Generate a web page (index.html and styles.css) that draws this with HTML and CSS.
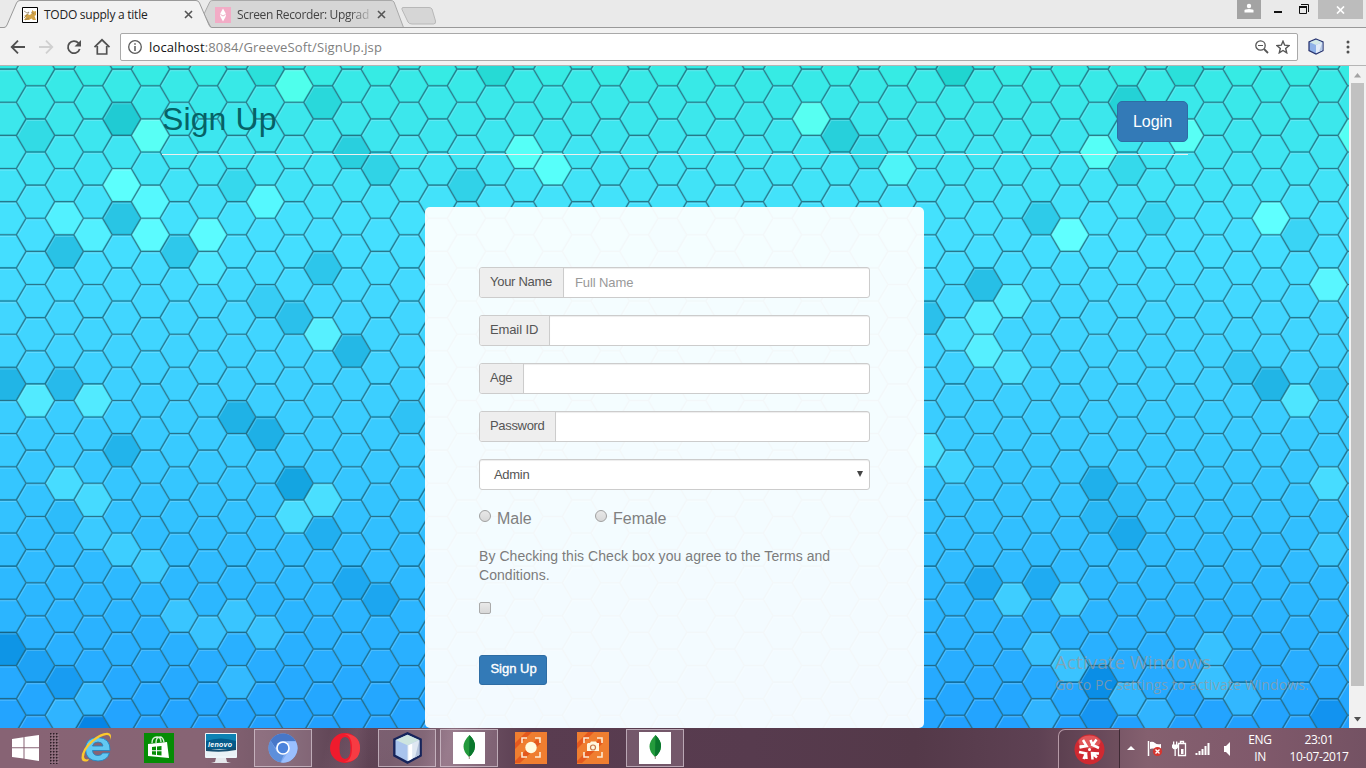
FILE: index.html
```html
<!DOCTYPE html>
<html lang="en">
<head>
<meta charset="utf-8">
<title>TODO supply a title</title>
<link rel="stylesheet" href="styles.css">
</head>
<body>
<div class="screen">
  <header class="tabstrip">
    <svg class="tab-shapes" width="460" height="28" viewBox="0 0 460 28">
      <path d="M197 28L201 20L210.500 28Z" fill="#f2f2f2"/>
      <path d="M204 14L210 1.500Q211 .5 213 .5H391Q393 .5 394 2L403.500 27.500H211Z" fill="#d6d6d6" stroke="#a9a9a9"/>
      <path d="M403 7.500H429Q431 7.500 432 9L435.500 21Q436 24 433.500 24H412Q409 24 408 22L402 9.500Q401.500 7.500 403 7.500Z" fill="#d6d6d6" stroke="#b8b8b8"/>
      <path d="M0 27.500H4Q6 27.500 7 25L16.500 3Q17.500 .5 20 .5H196Q198.500 .5 199.500 3L209 25Q210 27.500 212 27.500V29H0Z" fill="#f2f2f2"/>
      <path d="M0 27.500H4Q6 27.500 7 25L16.500 3Q17.500 .5 20 .5H196Q198.500 .5 199.500 3L209 25Q210 27.500 212 27.500H460" fill="none" stroke="#999"/>
    </svg>
    <div class="tab tab-active">
      <svg class="favicon" width="16" height="16" viewBox="0 0 16 16"><path d="M.5.5h15v15H.5z" fill="#fff" stroke="#000"/><path d="M2 13l2-3-2-1 3-2 3 1 2-2V3l2 1.500L14 4v4l-1.500 1 1.500 4h-3l-1.500-1.500L7 13z" fill="#d3a448"/><path d="M2 4l3 2 2-1-2 3-3 3M9 5l3 2M3 13l4-2" fill="none" stroke="#8a7a5c" stroke-width=".7"/></svg>
      <span class="tab-title">TODO supply a title</span>
      <svg class="tab-close" width="9" height="9" viewBox="0 0 9 9"><path d="M1 1l7 7M8 1L1 8"/></svg>
    </div>
    <div class="tab tab-idle">
      <svg class="favicon" width="16" height="16" viewBox="0 0 16 16"><rect width="16" height="16" fill="#f2acc6"/><path d="M8 1.500l2.500 4.500L11 8l-.5 2L8 14.500 5.500 10 5 8l.5-2z" fill="#fff"/><path d="M5.500 7.500L8 9l2.500-1.500" fill="none" stroke="#e79ab6" stroke-width=".8"/></svg>
      <span class="tab-title fade">Screen Recorder: Upgrad</span>
      <svg class="tab-close" width="9" height="9" viewBox="0 0 9 9"><path d="M1 1l7 7M8 1L1 8"/></svg>
    </div>
    <div class="win-buttons">
      <span class="user"><svg width="24" height="19" viewBox="0 0 24 19"><circle cx="12" cy="6" r="2.200" fill="#fff"/><path d="M7.500 12.500v-2Q7.500 9 12 9t4.500 1.500v2z" fill="#fff"/></svg></span>
      <svg class="min" width="8" height="2"><rect width="8" height="2" fill="#111"/></svg>
      <svg class="max" width="10" height="10" viewBox="0 0 10 10"><path d="M2 .5h7.500V8M.5 2.500h7v7h-7z" fill="none" stroke="#111"/><path d="M0 2h8v2H0z" fill="#111"/></svg>
      <span class="close"><svg width="9" height="8" viewBox="0 0 9 8"><path d="M1 .5l7 7M8 .5l-7 7" stroke="#fff" stroke-width="1.700"/></svg></span>
    </div>
  </header>
  <div class="toolbar">
    <svg class="nav" width="120" height="38" viewBox="0 0 120 38" fill="none" stroke="#505050" stroke-width="1.800">
      <path d="M25 19H12M18 12.700L11.700 19l6.300 6.300"/>
      <path d="M39 19h13M46 12.700L52.300 19 46 25.300" stroke="#d0d0d0"/>
      <path d="M78.500 15.200A6 6 0 1 0 79.700 21"/><path d="M81 12v6.500h-6.500z" fill="#505050" stroke="none"/>
      <path d="M94.500 19.200L102 11.800l7.500 7.400M97.300 18v8h9.400v-8" stroke-width="1.700"/>
    </svg>
    <div class="omnibox">
      <svg width="14" height="14" viewBox="0 0 14 14"><circle cx="7" cy="7" r="6.300" fill="none" stroke="#5a5a5a" stroke-width="1.300"/><path d="M7 6v5M7 3.300v1.500" stroke="#5a5a5a" stroke-width="1.500"/></svg>
      <span class="url"><b>localhost</b>:8084/GreeveSoft/SignUp.jsp</span>
      <svg class="zoomicon" width="14" height="14" viewBox="0 0 14 14" fill="none" stroke="#555"><circle cx="5.500" cy="5.500" r="4.700" stroke-width="1.300"/><path d="M3 5.500h5"/><path d="M9 9l4 4" stroke-width="1.800"/></svg>
      <svg width="14" height="14" viewBox="0 0 14 14"><path d="M7 1.200l1.700 4 4.300.4-3.300 2.900 1 4.300L7 10.500l-3.700 2.300 1-4.300L1 5.600l4.300-.4z" fill="none" stroke="#555" stroke-width="1.400"/></svg>
    </div>
    <svg class="ext" width="16" height="17" viewBox="0 0 32 34"><path d="M16 2L30 8v17L16 32 2 25V8z" fill="#8fb2e8" stroke="#28346f" stroke-width="2.500"/><path d="M16 3.500L28.500 8.500 16 14 3.500 8.500z" fill="#d3eae7"/><path d="M16 14l12.500-5.500v16L16 30.500z" fill="#e2ecf8"/><path d="M28.500 9v15.500L22 27.500z" fill="#b7c9e6"/></svg>
    <svg class="dots" width="4" height="14" viewBox="0 0 4 14" fill="#505050"><circle cx="2" cy="2" r="1.500"/><circle cx="2" cy="7" r="1.500"/><circle cx="2" cy="12" r="1.500"/></svg>
  </div>
  <main class="viewport">
    <div class="page">
      <svg class="honeycomb" id="honeycomb" width="1349" height="662" viewBox="0 66 1349 662"></svg>
      <div class="page-header"><h2>Sign Up</h2><button class="btn btn-login">Login</button></div>
      <form class="card">
        <label class="group"><span class="addon">Your Name</span><span class="field">Full Name</span></label>
        <label class="group"><span class="addon addon-email">Email ID</span><span class="field"></span></label>
        <label class="group"><span class="addon addon-age">Age</span><span class="field"></span></label>
        <label class="group"><span class="addon addon-password">Password</span><span class="field"></span></label>
        <div class="select"><span>Admin</span><svg width="6" height="6"><path d="M0 0h6L3 6z" fill="#444"/></svg></div>
        <div class="radios"><span class="option"><i class="radio"></i>Male</span><span class="option"><i class="radio"></i>Female</span></div>
        <p class="terms">By Checking this Check box you agree to the Terms and Conditions.</p>
        <i class="check"></i>
        <button class="btn btn-submit">Sign Up</button>
      </form>
      <div class="watermark"><div class="wm-title">Activate Windows</div><div class="wm-sub">Go to PC settings to activate Windows.</div></div>
    </div>
    <div class="scrollbar">
      <svg width="7" height="5"><path d="M0 4.500L3.500 0 7 4.500z" fill="#a3a3a3"/></svg>
      <div class="thumb"></div>
      <svg width="7" height="5"><path d="M0 0h7L3.500 4.500z" fill="#505050"/></svg>
    </div>
  </main>
  <footer class="taskbar">
    <div class="start"><svg width="27" height="26" viewBox="0 0 27 26" fill="#fff"><path d="M0 4l11.500-1.700v10H0zM12.500 2.100L27 0v12.300H12.500zM0 13.300h11.500v10.200L0 22zM12.500 13.300H27V26l-14.500-2.200z"/></svg></div>
    <svg class="grip" width="16" height="31"><defs><pattern id="dots" width="3" height="3" patternUnits="userSpaceOnUse"><rect width="1.500" height="1.500" fill="#2d2027"/><rect x="1.500" y="1.500" width="1" height="1" fill="#b39ca6"/></pattern></defs><rect width="9" height="31" fill="url(#dots)"/></svg>
    <div class="task"><svg width="32" height="32" viewBox="0 0 32 32"><path fill-rule="evenodd" d="M29 18.500H11.500q.5 5 5.500 5 3.500 0 4.500-2.500h7Q26 29 17 29 4.500 28.500 4.500 17T17 5.500Q29.500 6 29 18.500zM11.500 14H22q-.5-4-5-4t-5.500 4z" fill="#62c8f2" stroke="#2484c0" stroke-width=".9"/><path d="M29 8q1-5-3.500-5Q20 3.500 12 10 3 18 3 25q.5 3.500 5 2l-1 2q-6 2-6.500-3Q.5 17 11 8 20 .5 26.500.800 32 1.500 29 8z" fill="#fcc92e"/></svg></div>
    <div class="task"><svg width="30" height="30" viewBox="0 0 30 30"><rect width="30" height="30" fill="#058c05"/><path d="M4 11l19-2 2 16L4 23z" fill="#fff"/><path d="M8 10q0-6 5-6 4 0 4 5M12 10q0-6 4-6 3 0 4 5" fill="none" stroke="#d8f0d8" stroke-width="1.300"/><path d="M8 14l4-.4v3.700H8zm5-.5l4.500-.5v4.300H13zM8 18.300h4V22l-4-.4zm5 0h4.500v4.300L13 22z" fill="#058c05"/></svg></div>
    <div class="task"><svg width="32" height="32" viewBox="0 0 32 32"><rect y="1" width="32" height="25" rx="1" fill="#eef6fa"/><rect x="1" y="2" width="30" height="17" fill="#0d82b3"/><path d="M1 9q15-5 30 0v8H1z" fill="#045b8b"/><rect x="1" y="17" width="30" height="7" fill="#e9f2f6"/><path d="M1 16q15 4 30-1v3q-14 3-30 1z" fill="#174f70"/><text x="3" y="15" class="brand">lenovo</text><path d="M11 26h10l1 4 4 1H6l4-1z" fill="#e5e8ec"/></svg></div>
    <div class="task open"><svg width="30" height="30" viewBox="0 0 30 30"><circle cx="15" cy="15" r="14.500" fill="#7faaf0"/><path d="M2.500 7.500A14.500 14.500 0 0 1 27.600 8H15q-6 0-7.500 7z" fill="#4777c8"/><path d="M2.500 7.500l6.300 11Q11 22 16 21.500L12.500 29.200A14.500 14.500 0 0 1 2.500 7.500z" fill="#5d8fdb"/><path d="M27.800 8.500A14.500 14.500 0 0 1 13 29.500l7.500-11q2-5-1.500-10z" fill="#9abfff"/><circle cx="15" cy="15" r="6.800" fill="#fff"/><circle cx="15" cy="15" r="5.200" fill="#4b83dc"/></svg></div>
    <div class="task"><svg width="30" height="30" viewBox="0 0 30 30"><path fill-rule="evenodd" d="M15 0a15 15 0 1 0 0 30 15 15 0 1 0 0-30zm0 4q5.500 0 5.500 11T15 26 9.500 15 15 4z" fill="#f01b2d"/><path d="M14 1q16 0 16 14T14 29q8-1 8-14T14 1z" fill="#f9474b" opacity=".75"/></svg></div>
    <div class="task open"><svg width="31" height="32" viewBox="0 0 32 34"><path d="M16 1.500L30 8v17L16 32.500 2 25V8z" fill="#a9c4ed" stroke="#16245b" stroke-width="2.500"/><path d="M16 3L28.500 8.500 16 14 3.500 8.500z" fill="#cee5df"/><path d="M16 14l12.500-5.500v16L16 31z" fill="#dfe8f2"/><path d="M17 14l4-1.500v16L17 30.500z" fill="#fff"/><path d="M28.500 9v15.500L24 27z" fill="#b4c3da"/></svg></div>
    <div class="task open"><svg width="32" height="32" viewBox="0 0 32 32"><rect width="32" height="32" fill="#fff"/><path d="M16.500 3q6 6 5.500 11.500Q21.500 21 16 25q-5.500-5-5.500-10.500T16.500 3z" fill="#249a3c"/><path d="M16.500 3q6 6 5.500 11.500Q21.500 21 16 25z" fill="#0a772d"/><path d="M16.300 24v3" stroke="#a08e80"/></svg></div>
    <div class="task"><svg width="32" height="32" viewBox="0 0 32 32"><rect width="32" height="32" fill="#ef7e30"/><path d="M0 11L11 0h6L0 17zm0 18L22 7l4 4L5 31H0z" fill="#e4591e"/><path d="M7 11V6h5m8 0h5v5m0 9v5h-5m-8 0H7v-5" fill="none" stroke="#fcead2" stroke-width="1.600"/><circle cx="16" cy="15.500" r="5.700" fill="#fffbe0"/></svg></div>
    <div class="task"><svg width="32" height="32" viewBox="0 0 32 32"><rect width="32" height="32" fill="#ef7e30"/><path d="M0 11L11 0h6L0 17zm0 18L22 7l4 4L5 31H0z" fill="#e4591e"/><path d="M7 11V6h5m8 0h5v5m0 9v5h-5m-8 0H7v-5" fill="none" stroke="#fcead2" stroke-width="1.600"/><path d="M11 11h2l1-1.500h5l1 1.500h2v8H10v-7z" fill="#fff7df"/><circle cx="16" cy="15.500" r="2.500" fill="none" stroke="#c9784a" stroke-width="1.200"/></svg></div>
    <div class="task open"><svg width="32" height="32" viewBox="0 0 32 32"><rect width="32" height="32" fill="#fff"/><path d="M16.500 3q6 6 5.500 11.500Q21.500 21 16 25q-5.500-5-5.500-10.500T16.500 3z" fill="#249a3c"/><path d="M16.500 3q6 6 5.500 11.500Q21.500 21 16 25z" fill="#0a772d"/><path d="M16.300 24v3" stroke="#a08e80"/></svg></div>
    <div class="deskband"><svg width="31" height="31" viewBox="0 0 31 31"><circle cx="15.500" cy="15.500" r="15" fill="#cf2931"/><ellipse cx="15.500" cy="8" rx="11" ry="6.500" fill="#ec7474" opacity=".6"/><g fill="none" stroke="#fff" stroke-width="2.500"><path d="M9 6l3.500 6-7 .5M22.500 5.500l-4 5.500 6.500 3M5 18l7 1.500-2.500 5.500M18.500 25.500l-.5-6.500 7 .5M16.500 6l2 5M5.500 13.500l7-1.500M12 19l.500 6M18 19l5 4.500"/></g><circle cx="15.500" cy="15.500" r="1.500" fill="#fff"/></svg></div>
    <svg class="tray" width="110" height="40" viewBox="1126 728 110 40">
      <path d="M1127 750h8l-4-4z" fill="#fff"/>
      <path d="M1148.500 741v15" stroke="#fff" stroke-width="1.500"/><path d="M1150 742q3-1 5 1t6 1v7q-4 0-6-1.500t-5-.5z" fill="#fff"/><circle cx="1157.500" cy="751.500" r="4.600" fill="#d6352f"/><path d="M1155.500 749.500l4 4m0-4l-4 4" stroke="#fff" stroke-width="1.400"/>
      <path d="M1180.500 743.500h5v12h-7v-12h2M1180.500 743v-1.500h3v1.500" fill="none" stroke="#fff" stroke-width="1.300"/><path d="M1181 749h2.500v5h-2.500z" fill="#fff"/><path d="M1172 744.500h6v3q-1 2-3 2t-3-2zM1173 741.500h1.300v3h-1.300zm3 0h1.300v3H1176zM1174.500 749h1.300v7h-1.300z" fill="#fff"/>
      <path d="M1195.500 755v-2h2v2zm3 0v-4h2v4zm3 0v-6h2v6zm3 0v-9h2v9zm3 0v-12h2v12z" fill="#fff"/>
      <path d="M1224 746h2l4-4v14l-4-4h-2z" fill="#fff"/>
    </svg>
    <div class="lang"><span>ENG</span><span>IN</span></div>
    <div class="clock"><span>23:01</span><span>10-07-2017</span></div>
  </footer>
</div>
<script src="honeycomb.js"></script>
</body>
</html>
```
FILE: honeycomb.js
```js
(function () {
  var PX = 28.73, PY = 33.13;
  var stops = [[66, 54, 235, 228], [130, 61, 230, 238], [230, 69, 224, 255], [340, 64, 212, 255], [450, 56, 202, 255], [560, 47, 188, 255], [650, 41, 176, 255], [735, 33, 160, 255]];
  // Tint spots: x, y, strength (positive lightens, negative darkens)
  var tints = [
    150,135,3, 121,184,3, 150,200,2, 64,217,1.5, 150,234,2.5, 93,234,1.5, 207,234,2.5, 265,201,2, 293,84,2.5,
    207,267,1, 525,151,2.5, 553,168,2.5, 811,118,3, 898,168,1.5, 323,334,2.5,
    35,400,2.5, 93,400,2.5, 64,483,2, 93,500,2, 93,533,1, 121,550,1.5, 150,566,1.5, 293,517,2.5, 323,500,2.5,
    178,616,1.5, 207,632,1.5, 236,616,1.5, 265,632,1.5, 236,682,1.5, 93,697,1.5, 64,715,1.5,
    1099,151,2.5, 1186,135,3, 1071,235,3, 1271,218,3, 1329,284,2.5, 1012,301,1.8, 984,317,2, 955,334,1, 984,350,2.5,
    1012,367,1.5, 1300,400,2, 927,450,2, 1329,483,2, 955,466,1, 1012,599,2, 1071,599,2, 1041,648,1.5, 1213,648,1.5,
    1071,665,2, 1213,682,2, 1128,697,1.5, 1242,697,1.5, 1156,715,1.5, 1041,715,1.5, 1329,550,1, 1349,135,2.5,
    121,118,-2.5, 35,135,-1, 265,72,-1, 121,217,-2.5, 64,251,-2.5, 179,251,-2, 236,184,-1, 323,102,-1.5,
    351,151,-2, 379,168,-1.5, 496,74,-1.5, 468,184,-1.5, 840,135,-2, 870,151,-1, 323,268,-2, 293,318,-2, 265,300,-1,
    351,350,-2.5, 6,384,-2.5, 64,384,-2, 236,417,-2.5, 265,433,-2.5, 121,450,-2, 293,483,-3, 323,532,-1.5,
    64,516,-.5, 351,583,-1.5, 380,600,-1.5, 6,648,-2.5, 35,665,-1, 64,682,-1.3, 93,725,-2.5, 405,417,-1,
    1128,168,-1, 1156,218,-1, 1041,218,-2, 1300,235,-1, 984,284,-2.5, 927,317,-2, 1242,365,-1, 1271,383,-2.5,
    1329,383,-1, 1099,483,-2, 1128,500,-.7, 1099,516,-1, 1128,533,-2, 984,582,-1.5, 1041,582,-1.3, 1099,682,-2.5,
    1099,715,-1.3, 1329,715,-1.5, 1128,102,-2, 1184,72,-1, 955,74,-2, 668,234,-1.5, 840,234,-1, 611,433,-1.5
  ];
  var map = {};
  for (var i = 0; i < tints.length; i += 3) {
    var tc = Math.round((tints[i] - 6.8) / PX);
    var off = tc % 2 ? 102.3 : 85.7;
    map[tc + ',' + Math.round((tints[i + 1] - off) / PY)] = tints[i + 2];
  }
  function colour(y, t) {
    var s = 0;
    while (s < stops.length - 2 && y > stops[s + 1][0]) s++;
    var a = stops[s], b = stops[s + 1], k = Math.max(0, Math.min(1, (y - a[0]) / (b[0] - a[0])));
    var d = t > 0 ? [9, 11, 2] : [11, 11, 10];
    return 'rgb(' + [1, 2, 3].map(function (n) {
      return Math.max(0, Math.min(255, Math.round(a[n] + (b[n] - a[n]) * k + t * d[n - 1])));
    }).join(',') + ')';
  }
  var fills = '', lines = '';
  for (var c = -1; c < 49; c++) {
    for (var r = -2; r < 21; r++) {
      var x = 6.8 + c * PX, y = (c & 1 ? 102.3 : 85.7) + r * PY, h = PY / 2;
      fills += '<path fill="' + colour(y, map[c + ',' + r] || 0) + '" d="M' + (x - 19.2) + ' ' + y + 'l9.700 ' + (-h) + 'h19l9.700 ' + h + 'l-9.700 ' + h + 'h-19z"/>';
      lines += 'M' + (x - 9.5) + ' ' + (y + h) + 'L' + (x - 19.2) + ' ' + y + 'L' + (x - 9.5) + ' ' + (y - h) + 'h19';
    }
  }
  document.getElementById('honeycomb').innerHTML = fills +
    '<path class="comb-light" transform="translate(.7 1.500)" d="' + lines + '"/>' +
    '<path class="comb-soft" d="' + lines + '"/>' +
    '<path class="comb-dark" d="' + lines + '"/>';
}());
```
FILE: styles.css
```css
* { box-sizing: border-box; }
body { margin: 0; overflow: hidden; font-family: "Liberation Sans", Arial, sans-serif; }
svg { display: block; flex: none; }
.screen { width: 1366px; height: 768px; display: flex; flex-direction: column; }

.tabstrip { position: relative; height: 28px; display: flex; background: #eaeaea; border-bottom: 1px solid #999; font: 12px "Open Sans", sans-serif; color: #222; }
.tab-shapes { position: absolute; left: 0; top: 0; }
.tab { position: relative; display: flex; align-items: center; height: 29px; }
.tab-active { width: 204px; padding-left: 22px; }
.tab-idle { width: 190px; padding-left: 11px; }
.tab-title { width: 140px; margin-left: 6px; white-space: nowrap; letter-spacing: -.25px; }
.tab-idle .tab-title { width: 133px; color: #444; letter-spacing: -.35px; }
.fade { -webkit-mask-image: linear-gradient(90deg, #000 84%, rgba(0, 0, 0, .2)); mask-image: linear-gradient(90deg, #000 84%, rgba(0, 0, 0, .2)); }
.tab-close { fill: none; stroke: #555; stroke-width: 1.6; }
.tab-idle .tab-close { margin-left: 7px; }
.win-buttons { display: flex; margin-left: auto; padding-right: 3px; align-items: flex-start; }
.user { background: #a3a3a3; height: 19px; }
.min { margin: 11px 17px 0 13px; }
.max { margin: 4px 9px 0 0; }
.close { width: 45px; height: 19px; background: #bcbcbc; display: flex; align-items: center; justify-content: center; }

.toolbar { height: 38px; background: #f2f2f2; border-bottom: 1px solid #b5b5b5; display: flex; align-items: center; }
.omnibox { width: 1178px; height: 28px; border: 1px solid #a9a9a9; border-radius: 2px; background: #fff; display: flex; align-items: center; padding: 0 7px; gap: 7px; }
.url { font: 13px "Open Sans", sans-serif; color: #808080; letter-spacing: .14px; }
.url b { font-weight: 400; color: #111; }
.zoomicon { margin-left: auto; }
.ext { margin-left: 10px; }
.dots { margin-left: 22px; }

.viewport { height: 662px; display: flex; }
.page { position: relative; width: 1349px; height: 662px; overflow: hidden; }
.honeycomb { position: absolute; left: 0; top: 0; }
.comb-light, .comb-soft, .comb-dark { fill: none; }
.comb-light { stroke: #c4f5ff; stroke-width: 1.2; opacity: .26; }
.comb-soft { stroke: #04647d; stroke-width: 2.4; opacity: .17; }
.comb-dark { stroke: #033e50; stroke-width: 1.1; opacity: .6; }
.page-header { position: relative; width: 1026px; height: 89px; margin: 0 0 0 162px; border-bottom: 1px solid #eee; display: flex; justify-content: space-between; padding-top: 35px; }
.page-header h2 { margin: 0; font-size: 32px; font-weight: 400; line-height: 36px; color: #066266; letter-spacing: .1px; }
.btn { background: #337ab7; border: 1px solid #2e6da4; color: #fff; font-family: inherit; padding: 0; }
.btn-login { width: 71px; height: 41px; border-radius: 5px; font-size: 16px; }
.card { position: relative; width: 499px; height: 521px; margin: 52px 0 0 425px; padding: 60px 54px 0; border-radius: 5px; background: rgba(255, 255, 255, .945); }
.group { display: flex; height: 31px; margin-bottom: 17px; border: 1px solid #ccc; border-radius: 3px; overflow: hidden; background: #fff; font-size: 13px; color: #555; }
.addon { width: 84px; background: #eee; border-right: 1px solid #ccc; padding-left: 10px; line-height: 27px; letter-spacing: -.28px; white-space: nowrap; }
.addon-email { width: 70px; letter-spacing: -.12px; }
.addon-age { width: 44px; }
.addon-password { width: 76px; letter-spacing: -.32px; }
.field { flex: 1; padding-left: 11px; line-height: 29px; color: #999; letter-spacing: -.1px; box-shadow: inset 0 1px 1px rgba(0, 0, 0, .075); }
.select { display: flex; height: 31px; border: 1px solid #ccc; border-radius: 3px; background: #fff; align-items: center; justify-content: space-between; padding: 0 6px 2px 14px; font-size: 13px; letter-spacing: -.3px; color: #555; box-shadow: inset 0 1px 1px rgba(0, 0, 0, .075); }
.select span { padding-top: 2px; }
.radios { display: flex; height: 24px; margin-top: 17px; font-size: 16px; line-height: 24px; color: #808080; }
.option { display: flex; width: 116px; }
.radio { width: 12px; height: 12px; margin: 3px 6px 0 0; border: 1px solid #a0a0a0; border-radius: 50%; background: linear-gradient(#e8e8e8, #d8d8d8); }
.terms { margin: 16px 0 0; font-size: 14px; line-height: 19px; color: #7c7c7c; letter-spacing: .053px; }
.check { display: block; width: 12px; height: 12px; margin-top: 17px; border: 1px solid #aaa; border-radius: 2px; background: linear-gradient(#e9e9e9, #d8d8d8); }
.btn-submit { display: block; width: 68px; height: 30px; margin-top: 41px; padding: 0 0 3px 1px; border-radius: 3px; font-size: 13px; -webkit-text-stroke: .35px #fff; }
.watermark { position: absolute; left: 1055px; top: 583px; font-family: "Open Sans", sans-serif; color: rgba(155, 155, 155, .72); white-space: nowrap; }
.wm-title { font-size: 19px; line-height: 27px; }
.wm-sub { font-size: 14px; line-height: 18px; letter-spacing: .12px; }
.scrollbar { width: 17px; background: #f1f1f1; display: flex; flex-direction: column; align-items: center; padding: 7px 0 6px; }
.thumb { width: 13px; height: 603px; margin: 5px 0 auto; background: #c1c1c1; }

.taskbar { height: 40px; display: flex; align-items: center; color: #fff; background: linear-gradient(105deg, transparent 24%, rgba(180, 140, 160, .22) 26%, transparent 29%, transparent 31%, rgba(190, 155, 175, .25) 33%, transparent 36%), linear-gradient(90deg, #876374, #876474 15%, #735767 21%, #543a4b 27%, #765b6b 33%, #593c50 39%, #573b4e 55%, #543949 67%, #5e4153 76%, #84606f 84%, #80596b 92%, #745263); }
.start { width: 50px; padding-left: 12px; }
.task { width: 58px; height: 38px; margin: 0 2px; display: flex; align-items: center; justify-content: center; }
.open { border: 1px solid rgba(225, 210, 220, .65); background: rgba(210, 180, 200, .23); }
.brand { font: italic 900 7px "Liberation Sans", sans-serif; fill: #fff; letter-spacing: .3px; }
.deskband { width: 62px; height: 39px; margin-left: 372px; margin-top: 1px; display: flex; align-items: center; justify-content: center; border: 1px solid #b69aa7; border-width: 1px 1px 0; border-right-color: #3e2933; border-radius: 7px 0 0; background: rgba(50, 28, 42, .15); }
.tray { margin-left: 6px; }
.lang, .clock { display: flex; flex-direction: column; align-items: center; font: 12px/17px "Open Sans", sans-serif; letter-spacing: -.35px; }
.lang { width: 32px; margin-left: 8px; }
.clock { width: 70px; margin-left: 8px; }
```
